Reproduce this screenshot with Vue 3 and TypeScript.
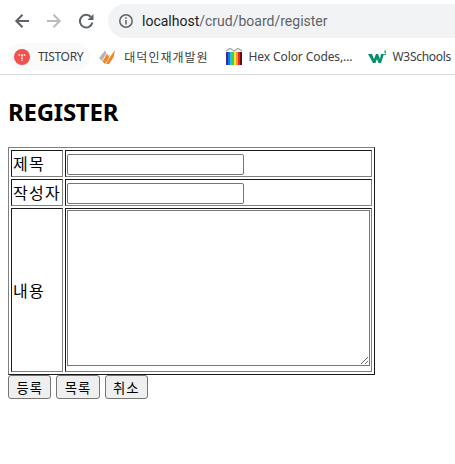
<script setup lang="ts">
const rainbow = ['#3b2a9e', '#1e6fe0', '#22c3e6', '#3ccf4e', '#f4e93b', '#f79a1f', '#e5262a', '#5a1010']
</script>

<template>
  <div class="browser">
    <div class="toolbar">
      <svg class="nav" width="16" height="16" viewBox="0 0 16 16" fill="none" stroke="#5f6368" stroke-width="2">
        <path d="M15 8H3M8.5 1.8L2.3 8L8.5 14.2" />
      </svg>
      <svg class="nav" width="16" height="16" viewBox="0 0 16 16" fill="none" stroke="#b9bbbe" stroke-width="2">
        <path d="M1 8H13M7.5 1.8L13.7 8L7.5 14.2" />
      </svg>
      <svg class="nav" width="16" height="16" viewBox="0 0 16 16" fill="none">
        <path d="M13 4A6.3 6.3 0 1 0 14.4 9.5" stroke="#5f6368" stroke-width="2" />
        <path d="M15.5 1V7H9.5Z" fill="#5f6368" />
      </svg>
      <div class="omnibox">
        <svg width="16" height="16" viewBox="0 0 16 16" fill="none" stroke="#5f6368" stroke-width="1.5">
          <circle cx="8" cy="8" r="6.2" />
          <path d="M8 7V11.5M8 4.2V5.8" />
        </svg>
        <span class="url"><b>localhost</b>/crud/board/register</span>
      </div>
    </div>
    <div class="bookmarks">
      <div class="bookmark tistory">
        <svg width="16" height="16" viewBox="0 0 16 16">
          <circle cx="8" cy="8" r="8" fill="#f2504b" />
          <path d="M4.5 6H11.5M8 6V12" stroke="#fff" stroke-width="1.6" stroke-dasharray="1.6 1" />
        </svg>
        <span>TISTORY</span>
      </div>
      <div class="bookmark ddit">
        <svg width="16" height="16" viewBox="0 0 16 16">
          <path d="M0 9L6 1.5L7.5 4L3 12Z" fill="#b4b4b4" />
          <path d="M3.5 12.5L8 4.5L9.5 7L11 5L9 11L6 15Z" fill="#ef8a2c" />
          <path d="M7 15L11 8L16 1L14.5 8.5L10 15Z" fill="#f0862a" />
        </svg>
        <span>대덕인재개발원</span>
      </div>
      <div class="bookmark hex">
        <svg width="18" height="18" viewBox="0 0 18 18">
          <path d="M1 3L5 0.5L9 3L13 0.5L17 3" fill="none" stroke="#a8a8a8" stroke-width="1.4" />
          <rect v-for="(c, i) in rainbow" :key="c" :x="1 + i * 2" y="4" width="2" height="13" :fill="c" />
        </svg>
        <span>Hex Color Codes,...</span>
      </div>
      <div class="bookmark w3">
        <svg width="18" height="16" viewBox="0 0 18 16">
          <path d="M0 5H4L6 10L8 5H10L12 10L13 5H16L13 14H10.5L9 10L7.5 14H5Z" fill="#04906c" />
          <path d="M16 2H18L16.8 3.5H18V5.5H16" fill="none" stroke="#04906c" stroke-width="0.8" />
        </svg>
        <span>W3Schools</span>
      </div>
    </div>
  </div>

  <div class="page">
    <h2>REGISTER</h2>
    <table>
      <tbody>
        <tr>
          <td class="label">제목</td>
          <td><input type="text" /></td>
        </tr>
        <tr>
          <td class="label">작성자</td>
          <td><input type="text" /></td>
        </tr>
        <tr>
          <td class="label">내용</td>
          <td><textarea></textarea></td>
        </tr>
      </tbody>
    </table>
    <div class="actions">
      <button>등록</button>
      <button>목록</button>
      <button>취소</button>
    </div>
  </div>
</template>

<style>
body {
  background: #fff;
  overflow: hidden;
}
</style>

<style scoped>
.browser {
  height: 75px;
  border-bottom: 1px solid #d9d9d9;
  box-sizing: border-box;
  overflow: hidden;
  font-family: "Noto Sans", "Noto Sans CJK KR", sans-serif;
}

.toolbar {
  height: 38px;
  display: flex;
  align-items: center;
  gap: 16px;
  padding: 4px 0 0 14px;
  box-sizing: border-box;
}

.nav {
  flex: none;
}

.omnibox {
  flex: 1;
  height: 34px;
  margin-left: -2px;
  padding-left: 10px;
  display: flex;
  align-items: center;
  gap: 8px;
  background: #f1f3f4;
  border-radius: 17px 0 0 17px;
}

.url {
  font-size: 14px;
  font-family: Roboto, sans-serif;
  color: #5f6368;
  white-space: nowrap;
}

.url b {
  font-weight: 400;
  color: #202124;
}

.bookmarks {
  height: 27px;
  margin-top: 5px;
  display: flex;
  gap: 2px;
  padding-left: 8px;
  white-space: nowrap;
}

.bookmark {
  display: flex;
  align-items: center;
  padding: 0 7px;
  font-size: 12px;
  color: #3c4043;
  flex: none;
  border-radius: 14px;
}

.tistory {
  gap: 8px;
  padding-left: 6px;
  background: #fafafa;
}

.tistory span {
  letter-spacing: -0.3px;
}

.ddit {
  gap: 9px;
}

.ddit span {
  letter-spacing: 1px;
}

.hex,
.w3 {
  gap: 6px;
}

.hex span {
  letter-spacing: -0.1px;
}

.w3 span {
  letter-spacing: -0.3px;
}

.page {
  padding: 8px;
  font-family: "Noto Sans CJK KR", sans-serif;
  color: #000;
}

h2 {
  margin: 11px 0 17px;
  font-size: 24px;
  line-height: 36px;
  font-weight: 700;
  letter-spacing: -0.25px;
  font-family: "Noto Sans", "Noto Sans CJK KR", sans-serif;
}

table {
  width: 367px;
  border-collapse: separate;
  border-spacing: 2px;
  border: 1px solid;
  border-color: #808080 #1a1a1a #1a1a1a #808080;
}

td {
  padding: 1px;
  border: 1px solid;
  border-color: #1a1a1a #808080 #808080 #1a1a1a;
  font-size: 16px;
  line-height: 23px;
  letter-spacing: 1.3px;
}

.label {
  width: 48px;
  white-space: nowrap;
}

input {
  display: block;
  width: 177px;
  height: 21px;
  margin: 2px 0 0;
  padding: 1px 2px;
  box-sizing: border-box;
  border: 1px solid #767676;
  border-radius: 2px;
  background: #fff;
}

textarea {
  display: block;
  width: 303px;
  height: 156px;
  margin: 0 0 4px;
  padding: 2px;
  box-sizing: border-box;
  border: 1px solid #767676;
  background: #fff;
}

.actions {
  display: flex;
  gap: 5px;
}

button {
  width: 43.3px;
  height: 24px;
  padding: 0;
  border: 1px solid #767676;
  border-radius: 3px;
  background: #efefef;
  color: #000;
  font-size: 13.33px;
  letter-spacing: 1px;
  font-family: "Noto Sans CJK KR", sans-serif;
}
</style>
